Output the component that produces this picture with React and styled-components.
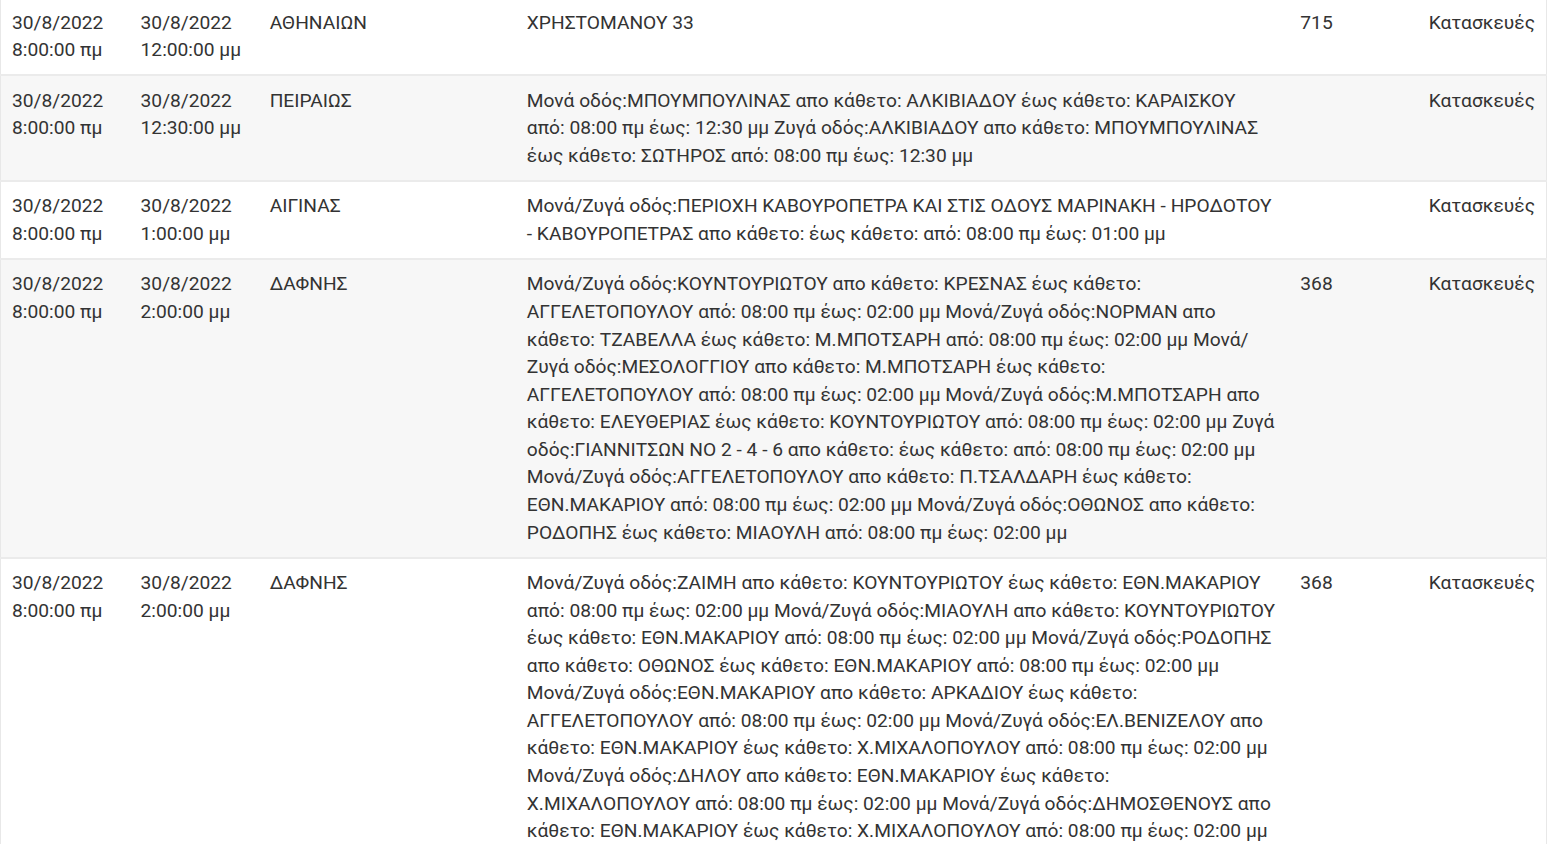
import React from "react";
import styled, { createGlobalStyle } from "styled-components";

const GlobalStyle = createGlobalStyle`
  html, body { margin: 0; padding: 0; background: #fff; overflow: hidden; }
  body { font-family: Roboto, "Noto Sans", sans-serif; color: #333; }
`;

const Wrapper = styled.div`
  width: 1547px;
  margin-top: -4px;
`;

const Table = styled.table`
  width: 1547px;
  table-layout: fixed;
  border-collapse: collapse;
  border-left: 1px solid #e8e8e8;
  border-right: 1px solid #e8e8e8;
  font-size: 19.2px;
  line-height: 27.56px;
`;

const Col = styled.col`
  width: ${(p) => p.$w}px;
`;

const Row = styled.tr`
  background: ${(p) => (p.$striped ? "#f7f7f7" : "#fff")};
  border-top: 2px solid #ebebeb;
`;

const Cell = styled.td`
  padding: 10.5px 11px;
  vertical-align: top;
  text-align: left;
  word-wrap: break-word;
`;

const DescCell = styled(Cell)`
  padding-right: 13px;
`;

const TypeCell = styled(Cell)`
  text-align: right;
  white-space: nowrap;
  padding-left: 6px;
`;

const colWidths = [129, 129, 257, 773, 129, 128];

const rows = [
  {
    from: ["30/8/2022", "8:00:00 πμ"],
    to: ["30/8/2022", "12:00:00 μμ"],
    area: "ΑΘΗΝΑΙΩΝ",
    desc: "ΧΡΗΣΤΟΜΑΝΟΥ 33",
    num: "715",
    type: "Κατασκευές",
  },
  {
    from: ["30/8/2022", "8:00:00 πμ"],
    to: ["30/8/2022", "12:30:00 μμ"],
    area: "ΠΕΙΡΑΙΩΣ",
    desc: "Μονά οδός:ΜΠΟΥΜΠΟΥΛΙΝΑΣ απο κάθετο: ΑΛΚΙΒΙΑΔΟΥ έως κάθετο: ΚΑΡΑΙΣΚΟΥ από: 08:00 πμ έως: 12:30 μμ Ζυγά οδός:ΑΛΚΙΒΙΑΔΟΥ απο κάθετο: ΜΠΟΥΜΠΟΥΛΙΝΑΣ έως κάθετο: ΣΩΤΗΡΟΣ από: 08:00 πμ έως: 12:30 μμ",
    num: "",
    type: "Κατασκευές",
  },
  {
    from: ["30/8/2022", "8:00:00 πμ"],
    to: ["30/8/2022", "1:00:00 μμ"],
    area: "ΑΙΓΙΝΑΣ",
    desc: "Μονά/Ζυγά οδός:ΠΕΡΙΟΧΗ ΚΑΒΟΥΡΟΠΕΤΡΑ ΚΑΙ ΣΤΙΣ ΟΔΟΥΣ ΜΑΡΙΝΑΚΗ - ΗΡΟΔΟΤΟΥ - ΚΑΒΟΥΡΟΠΕΤΡΑΣ απο κάθετο: έως κάθετο: από: 08:00 πμ έως: 01:00 μμ",
    num: "",
    type: "Κατασκευές",
  },
  {
    from: ["30/8/2022", "8:00:00 πμ"],
    to: ["30/8/2022", "2:00:00 μμ"],
    area: "ΔΑΦΝΗΣ",
    desc: "Μονά/Ζυγά οδός:ΚΟΥΝΤΟΥΡΙΩΤΟΥ απο κάθετο: ΚΡΕΣΝΑΣ έως κάθετο: ΑΓΓΕΛΕΤΟΠΟΥΛΟΥ από: 08:00 πμ έως: 02:00 μμ Μονά/Ζυγά οδός:ΝΟΡΜΑΝ απο κάθετο: ΤΖΑΒΕΛΛΑ έως κάθετο: Μ.ΜΠΟΤΣΑΡΗ από: 08:00 πμ έως: 02:00 μμ Μονά/Ζυγά οδός:ΜΕΣΟΛΟΓΓΙΟΥ απο κάθετο: Μ.ΜΠΟΤΣΑΡΗ έως κάθετο: ΑΓΓΕΛΕΤΟΠΟΥΛΟΥ από: 08:00 πμ έως: 02:00 μμ Μονά/Ζυγά οδός:Μ.ΜΠΟΤΣΑΡΗ απο κάθετο: ΕΛΕΥΘΕΡΙΑΣ έως κάθετο: ΚΟΥΝΤΟΥΡΙΩΤΟΥ από: 08:00 πμ έως: 02:00 μμ Ζυγά οδός:ΓΙΑΝΝΙΤΣΩΝ ΝΟ 2 - 4 - 6 απο κάθετο: έως κάθετο: από: 08:00 πμ έως: 02:00 μμ Μονά/Ζυγά οδός:ΑΓΓΕΛΕΤΟΠΟΥΛΟΥ απο κάθετο: Π.ΤΣΑΛΔΑΡΗ έως κάθετο: ΕΘΝ.ΜΑΚΑΡΙΟΥ από: 08:00 πμ έως: 02:00 μμ Μονά/Ζυγά οδός:ΟΘΩΝΟΣ απο κάθετο: ΡΟΔΟΠΗΣ έως κάθετο: ΜΙΑΟΥΛΗ από: 08:00 πμ έως: 02:00 μμ",
    num: "368",
    type: "Κατασκευές",
  },
  {
    from: ["30/8/2022", "8:00:00 πμ"],
    to: ["30/8/2022", "2:00:00 μμ"],
    area: "ΔΑΦΝΗΣ",
    desc: "Μονά/Ζυγά οδός:ΖΑΙΜΗ απο κάθετο: ΚΟΥΝΤΟΥΡΙΩΤΟΥ έως κάθετο: ΕΘΝ.ΜΑΚΑΡΙΟΥ από: 08:00 πμ έως: 02:00 μμ Μονά/Ζυγά οδός:ΜΙΑΟΥΛΗ απο κάθετο: ΚΟΥΝΤΟΥΡΙΩΤΟΥ έως κάθετο: ΕΘΝ.ΜΑΚΑΡΙΟΥ από: 08:00 πμ έως: 02:00 μμ Μονά/Ζυγά οδός:ΡΟΔΟΠΗΣ απο κάθετο: ΟΘΩΝΟΣ έως κάθετο: ΕΘΝ.ΜΑΚΑΡΙΟΥ από: 08:00 πμ έως: 02:00 μμ Μονά/Ζυγά οδός:ΕΘΝ.ΜΑΚΑΡΙΟΥ απο κάθετο: ΑΡΚΑΔΙΟΥ έως κάθετο: ΑΓΓΕΛΕΤΟΠΟΥΛΟΥ από: 08:00 πμ έως: 02:00 μμ Μονά/Ζυγά οδός:ΕΛ.ΒΕΝΙΖΕΛΟΥ απο κάθετο: ΕΘΝ.ΜΑΚΑΡΙΟΥ έως κάθετο: Χ.ΜΙΧΑΛΟΠΟΥΛΟΥ από: 08:00 πμ έως: 02:00 μμ Μονά/Ζυγά οδός:ΔΗΛΟΥ απο κάθετο: ΕΘΝ.ΜΑΚΑΡΙΟΥ έως κάθετο: Χ.ΜΙΧΑΛΟΠΟΥΛΟΥ από: 08:00 πμ έως: 02:00 μμ Μονά/Ζυγά οδός:ΔΗΜΟΣΘΕΝΟΥΣ απο κάθετο: ΕΘΝ.ΜΑΚΑΡΙΟΥ έως κάθετο: Χ.ΜΙΧΑΛΟΠΟΥΛΟΥ από: 08:00 πμ έως: 02:00 μμ",
    num: "368",
    type: "Κατασκευές",
  },
];

export default function App() {
  return (
    <>
      <GlobalStyle />
      <Wrapper>
        <Table>
          <colgroup>
            {colWidths.map((w, i) => (
              <Col key={i} $w={w} />
            ))}
          </colgroup>
          <tbody>
            {rows.map((r, i) => (
              <Row key={i} $striped={i % 2 === 1}>
                <Cell>
                  {r.from[0]}
                  <br />
                  {r.from[1]}
                </Cell>
                <Cell>
                  {r.to[0]}
                  <br />
                  {r.to[1]}
                </Cell>
                <Cell>{r.area}</Cell>
                <DescCell>{r.desc}</DescCell>
                <Cell>{r.num}</Cell>
                <TypeCell>{r.type}</TypeCell>
              </Row>
            ))}
          </tbody>
        </Table>
      </Wrapper>
    </>
  );
}
